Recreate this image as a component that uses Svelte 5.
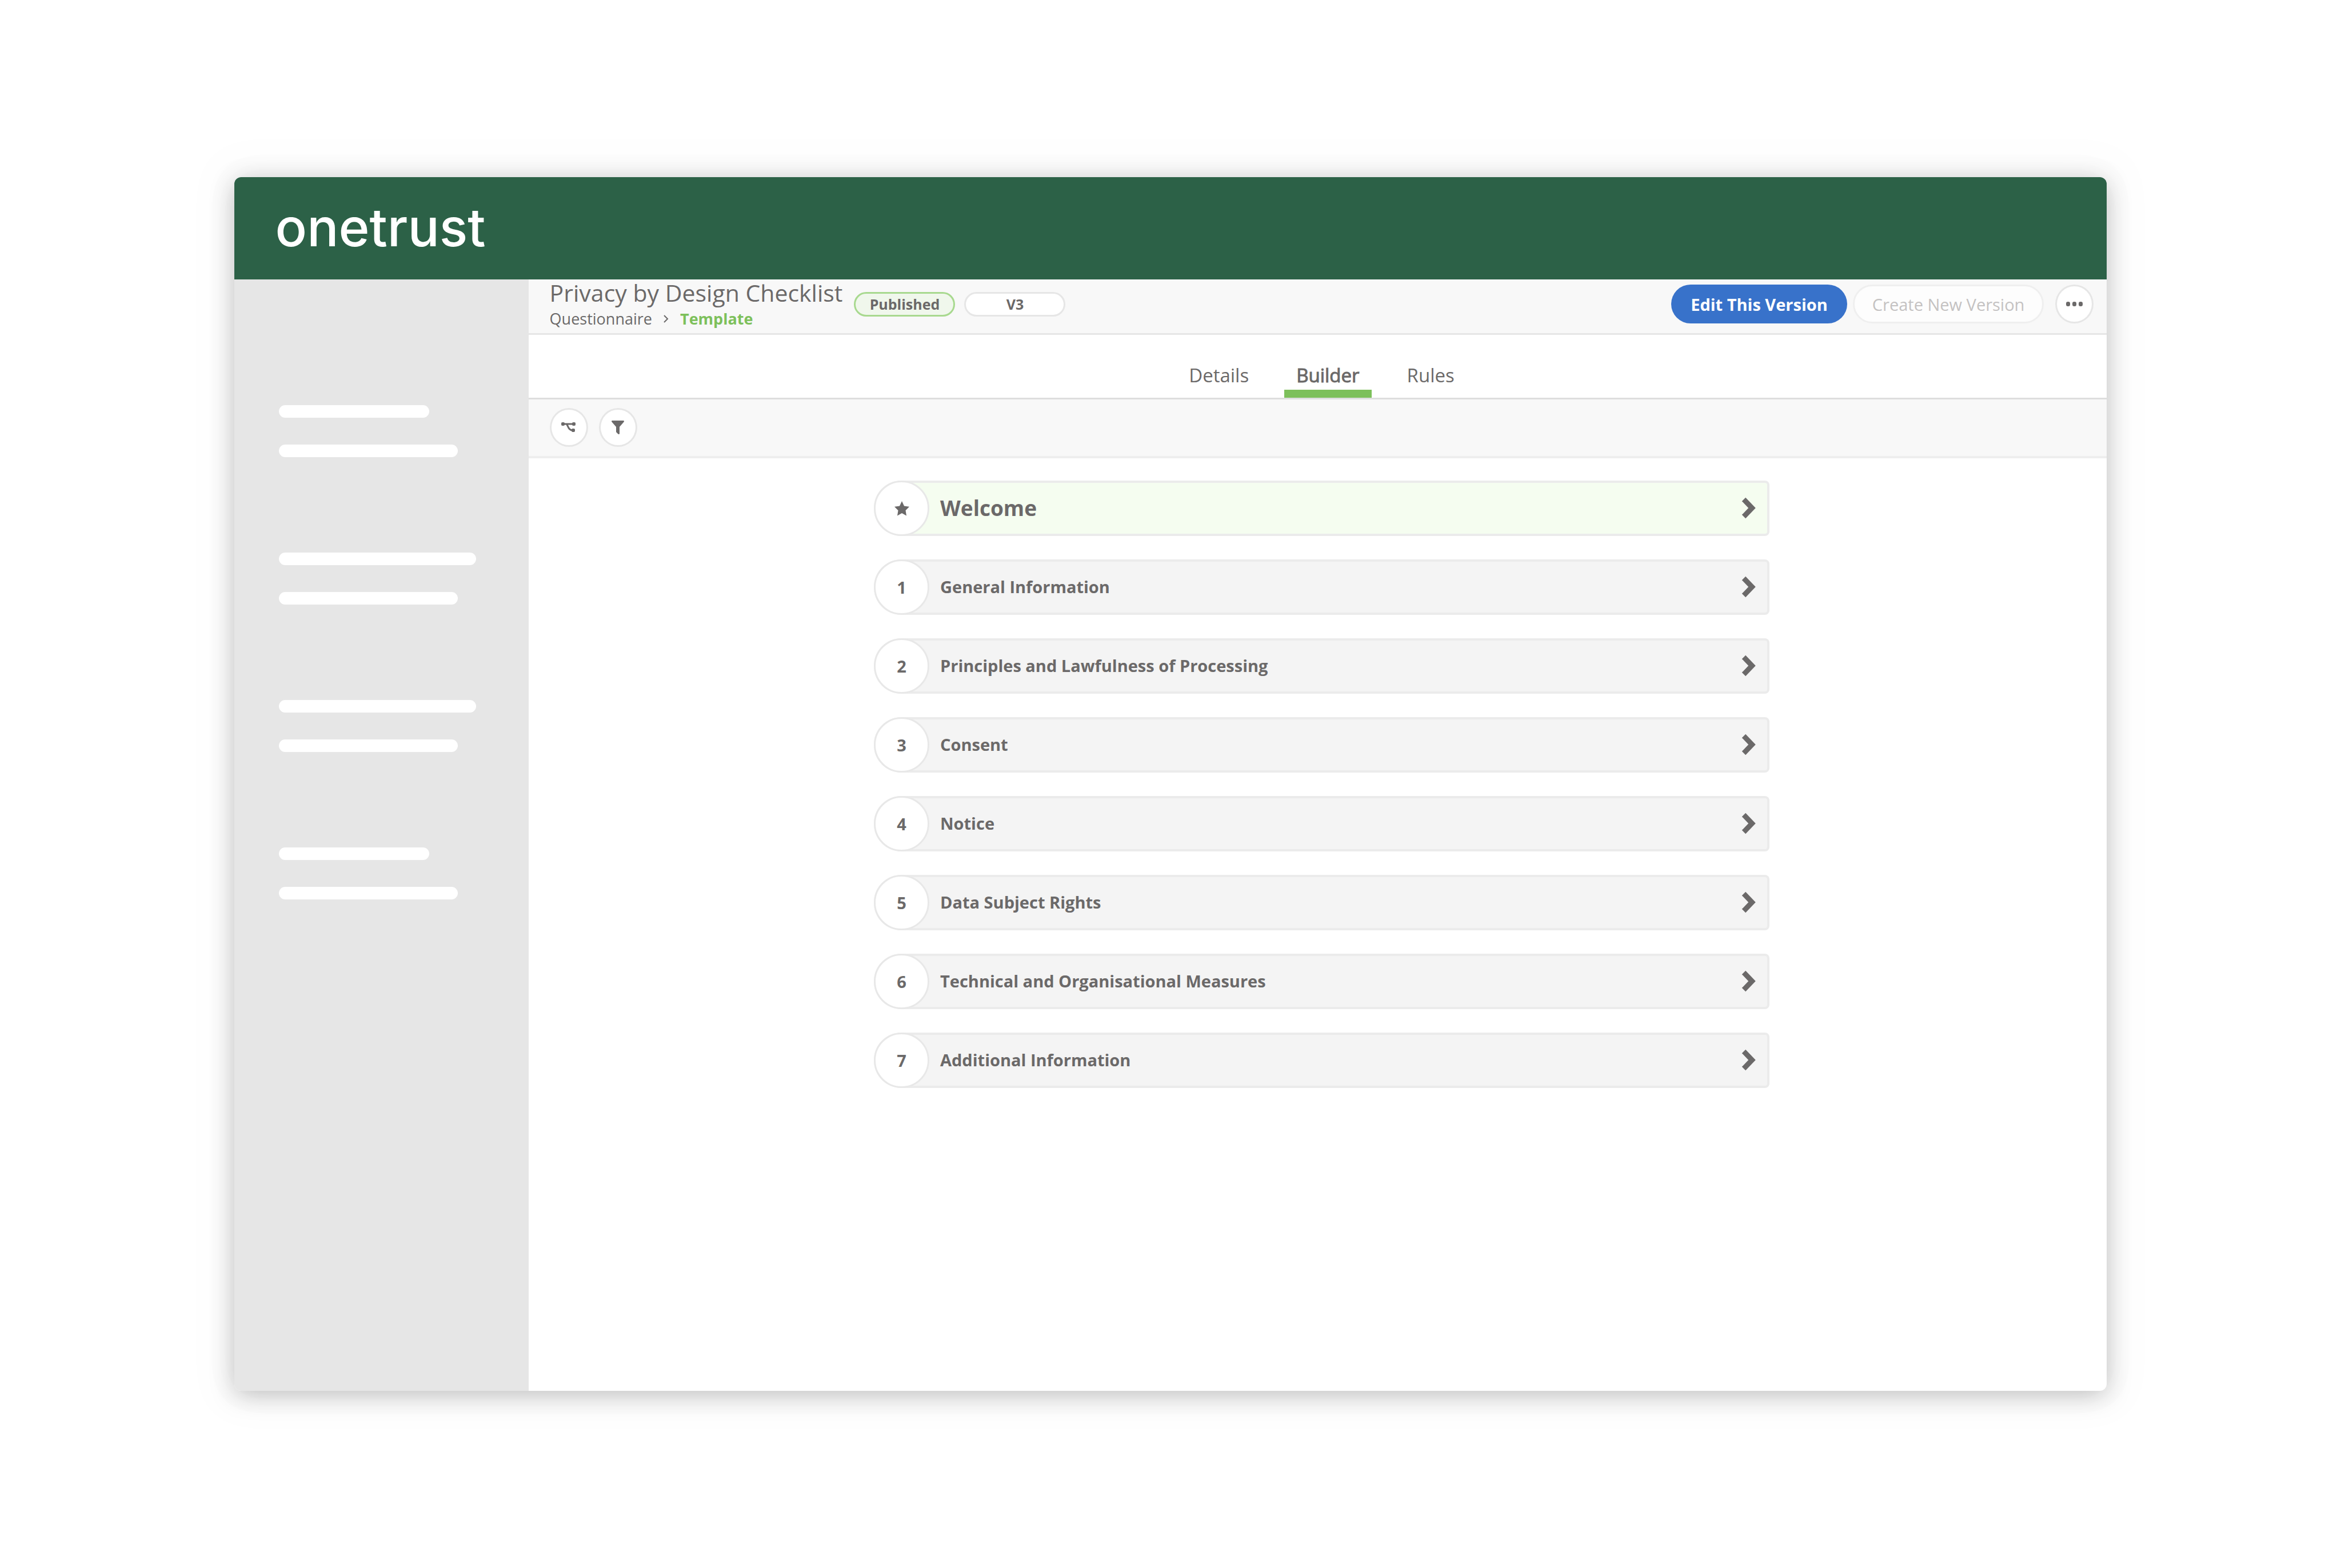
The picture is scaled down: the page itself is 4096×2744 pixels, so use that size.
<script>
  const placeholders = [
    ['short', 'medium'],
    ['long', 'medium'],
    ['long', 'medium'],
    ['short', 'medium']
  ];

  const tabs = ['Details', 'Builder', 'Rules'];
  let activeTab = 'Builder';

  const sections = [
    'General Information',
    'Principles and Lawfulness of Processing',
    'Consent',
    'Notice',
    'Data Subject Rights',
    'Technical and Organisational Measures',
    'Additional Information'
  ];
</script>

<div class="page">
  <div class="window">
    <header class="brand">
      <a href="/">onetrust</a>
    </header>

    <div class="body">
      <aside>
        {#each placeholders as group}
          <div class="group">
            {#each group as size}
              <span class="line {size}"></span>
            {/each}
          </div>
        {/each}
      </aside>

      <main>
        <div class="titleBar">
          <div class="heading">
            <h1>Privacy by Design Checklist</h1>
            <nav class="crumbs" aria-label="Breadcrumb">
              <a href="/questionnaire">Questionnaire</a>
              <svg class="crumbArrow" viewBox="0 0 9 18" aria-hidden="true">
                <path d="M1 3l6 6-6 6" />
              </svg>
              <a href="/template" class="current">Template</a>
            </nav>
          </div>
          <span class="pill published">Published</span>
          <span class="pill">V3</span>
          <div class="actions">
            <button class="primary">Edit This Version</button>
            <button class="secondary" disabled>Create New Version</button>
            <button class="round" aria-label="More actions">
              <svg class="dots" viewBox="0 0 29 8" aria-hidden="true">
                <rect x="0" y="0" width="7" height="8" rx="3" />
                <rect x="11" y="0" width="7" height="8" rx="3" />
                <rect x="22" y="0" width="7" height="8" rx="3" />
              </svg>
            </button>
          </div>
        </div>

        <div class="tabs">
          {#each tabs as tab}
            <button class:active={tab === activeTab} on:click={() => (activeTab = tab)}>{tab}</button>
          {/each}
        </div>

        <div class="toolbar">
          <button class="round" aria-label="Branches">
            <svg class="branch" viewBox="0 0 26 20" aria-hidden="true">
              <path d="M3 4h20M9 4c3 2 3 11 11 11" />
              <rect x="0" y="1" width="6" height="6" rx="2" />
              <rect x="19" y="1" width="6" height="6" rx="2" />
              <rect x="18" y="12" width="6" height="6" rx="2" />
            </svg>
          </button>
          <button class="round" aria-label="Filter">
            <svg class="filter" viewBox="0 0 22 24" aria-hidden="true">
              <path d="M1 0h20q2 1 0 3l-7 8v12q-1 2-3 0l-3-3v-9L1 3q-2-2 0-3z" />
            </svg>
          </button>
        </div>

        <div class="sections">
          <button class="row welcome">
            <span class="badge">
              <svg class="star" viewBox="0 0 26 26" aria-hidden="true">
                <path d="M13 0l4 8.500 9 1.300-6.500 6.500 1.500 9.200-8-4.400-8 4.400 1.500-9.200L0 9.800l9-1.300z" />
              </svg>
            </span>
            <span class="label">Welcome</span>
            <svg class="chevron" viewBox="0 0 25 38" aria-hidden="true">
              <path d="M4 4l14.500 15L4 34" />
            </svg>
          </button>
          {#each sections as section, i}
            <button class="row">
              <span class="badge">{i + 1}</span>
              <span class="label">{section}</span>
              <svg class="chevron" viewBox="0 0 25 38" aria-hidden="true">
                <path d="M4 4l14.500 15L4 34" />
              </svg>
            </button>
          {/each}
        </div>
      </main>
    </div>
  </div>
</div>

<style>
  :global(body) {
    background: #fff;
  }
  .page {
    box-sizing: border-box;
    min-height: 100vh;
    padding: 310px 10%;
    display: flex;
    font-family: 'Open Sans', 'Noto Sans', sans-serif;
    color: #6b6969;
  }
  .window {
    flex: 1;
    display: flex;
    flex-direction: column;
    border-radius: 12px;
    overflow: hidden;
    background: #fff;
    box-shadow: 0 0 80px 40px rgba(0, 0, 0, 0.015), 0 0 64px rgba(0, 0, 0, 0.04), 0 8px 44px rgba(0, 0, 0, 0.22);
  }
  .brand {
    box-sizing: border-box;
    height: 179px;
    display: flex;
    align-items: center;
    padding: 0 72px 4px;
    background: #2c6147;
  }
  .brand a {
    font-family: Inter, 'Liberation Sans', sans-serif;
    font-size: 92px;
    font-weight: 500;
    color: #fff;
    text-decoration: none;
  }
  .body {
    flex: 1;
    display: flex;
  }
  aside {
    box-sizing: border-box;
    flex: 0 0 515px;
    padding: 220px 78px;
    display: flex;
    flex-direction: column;
    gap: 167px;
    background: #e6e6e6;
  }
  .group {
    display: flex;
    flex-direction: column;
    gap: 47px;
  }
  .line {
    height: 22px;
    border-radius: 11px;
    background: #fff;
  }
  .short {
    width: 263px;
  }
  .medium {
    width: 313px;
  }
  .long {
    width: 345px;
  }
  main {
    flex: 1;
    min-width: 0;
  }
  button {
    margin: 0;
    font-family: inherit;
    color: inherit;
    cursor: pointer;
  }
  h1 {
    margin: 0;
    font-size: 41px;
    line-height: 46px;
    font-weight: 400;
  }
  .titleBar {
    box-sizing: border-box;
    height: 97px;
    display: flex;
    align-items: flex-start;
    padding: 0 23px 0 37px;
    border-bottom: 3px solid #e6e6e6;
    background: #f8f8f8;
  }
  .heading {
    margin-right: 20px;
  }
  .crumbs {
    display: flex;
    align-items: center;
    font-size: 27px;
    line-height: 46px;
  }
  .crumbs a {
    color: inherit;
    text-decoration: none;
  }
  .crumbs .current {
    font-weight: 700;
    color: #7dc05b;
  }
  .crumbArrow {
    width: 9px;
    height: 18px;
    margin: 0 20px;
    fill: none;
    stroke: #6b6969;
    stroke-width: 2;
  }
  .pill {
    box-sizing: border-box;
    width: 177px;
    height: 43px;
    margin: 22px 16px 0 0;
    border: 3px solid #e6e6e6;
    border-radius: 22px;
    background: #fff;
    font-size: 25px;
    line-height: 36px;
    font-weight: 700;
    text-align: center;
  }
  .published {
    border-color: #a8d98f;
    background: #f0f7ec;
  }
  .actions {
    display: flex;
    margin: 9px 0 0 auto;
  }
  .primary,
  .secondary {
    height: 68px;
    border-radius: 34px;
    padding: 0 34px;
    font-size: 29px;
    white-space: nowrap;
  }
  .primary {
    border: 0;
    margin-right: 10px;
    background: #3872ca;
    color: #fff;
    font-weight: 700;
  }
  .secondary {
    border: 3px solid #efefef;
    margin-right: 20px;
    padding: 0 31px;
    background: #fdfdfd;
    color: #c4c2c2;
  }
  .round {
    width: 67px;
    height: 68px;
    padding: 0;
    border: 3px solid #e6e6e6;
    border-radius: 50%;
    display: flex;
    align-items: center;
    justify-content: center;
    background: #fff;
  }
  .dots {
    width: 29px;
    height: 8px;
    fill: #6b6969;
  }
  .tabs {
    box-sizing: border-box;
    height: 113px;
    display: flex;
    align-items: flex-end;
    justify-content: center;
    gap: 41px;
    padding-left: 14px;
    border-bottom: 3px solid #dedede;
  }
  .tabs button {
    height: 62px;
    padding: 0 21px 2px;
    border: 0;
    border-bottom: 14px solid transparent;
    border-radius: 4px 4px 0 0;
    background: none;
    font-size: 33px;
    line-height: 46px;
  }
  .tabs .active {
    border-bottom-color: #7dc05b;
    -webkit-text-stroke: 1px #6b6969;
  }
  .toolbar {
    box-sizing: border-box;
    height: 103px;
    display: flex;
    align-items: center;
    gap: 19px;
    padding: 0 37px 2px;
    border-bottom: 4px solid #eee;
    background: #f8f8f8;
  }
  .branch {
    width: 26px;
    height: 20px;
    fill: #6b6969;
  }
  .branch path {
    fill: none;
    stroke: #6b6969;
    stroke-width: 3;
  }
  .filter {
    width: 22px;
    height: 24px;
    fill: #6b6969;
  }
  .sections {
    width: 1567px;
    max-width: 100%;
    margin: 39px auto;
    padding-left: 14px;
    display: flex;
    flex-direction: column;
    gap: 41px;
  }
  .row {
    box-sizing: border-box;
    width: 100%;
    height: 97px;
    padding: 0 20px 2px 0;
    border: 4px solid #ebebeb;
    border-left: 0;
    border-radius: 48px 8px 8px 48px;
    display: flex;
    align-items: center;
    background: #f4f4f4;
    font-size: 29px;
    font-weight: 700;
    text-align: left;
  }
  .badge {
    box-sizing: border-box;
    flex: none;
    width: 97px;
    height: 97px;
    margin: 0 19px -2px 0;
    border: 3px solid #e8e8e8;
    border-radius: 50%;
    display: flex;
    align-items: center;
    justify-content: center;
    background: #fff;
  }
  .label {
    flex: 1;
  }
  .welcome {
    background: #f5fdf0;
    font-size: 37px;
  }
  .star {
    width: 26px;
    height: 26px;
    fill: #6b6969;
  }
  .chevron {
    width: 25px;
    height: 38px;
    fill: none;
    stroke: #6b6969;
    stroke-width: 9;
  }
</style>
